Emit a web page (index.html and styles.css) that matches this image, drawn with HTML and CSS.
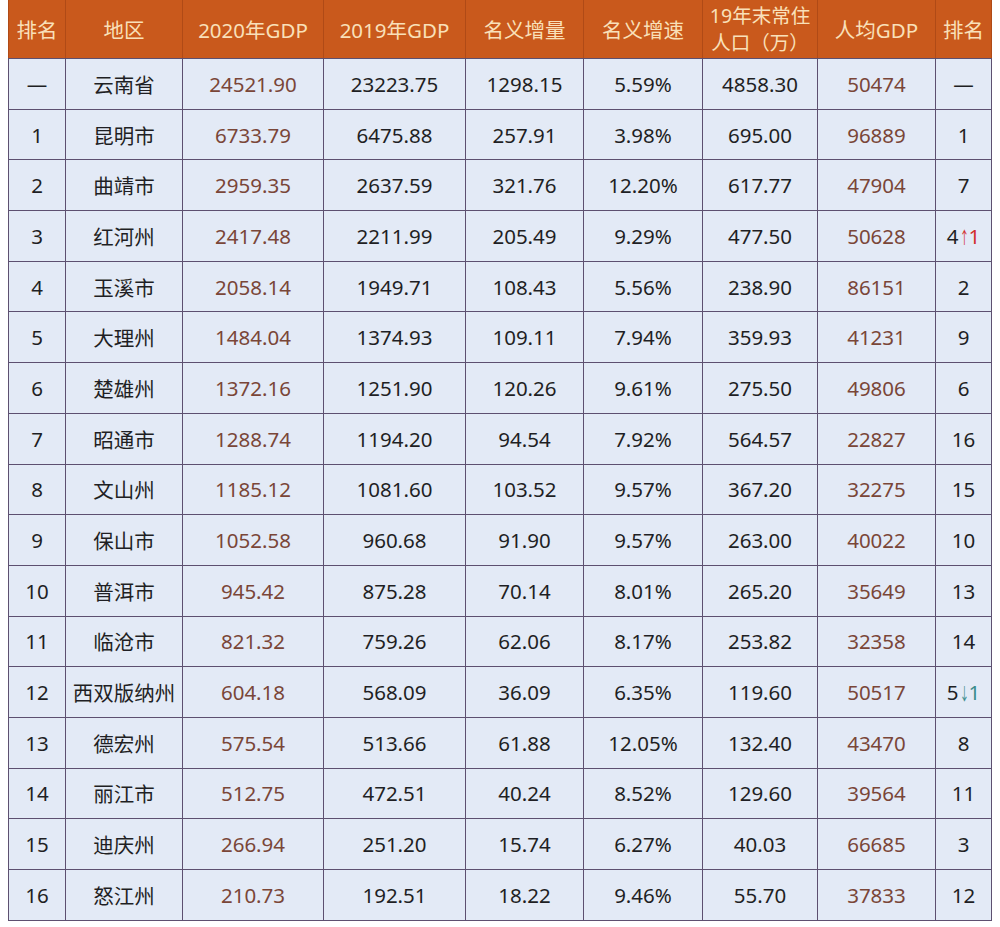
FILE: index.html
```html
<!DOCTYPE html>
<html lang="zh-CN">
<head>
<meta charset="utf-8">
<title>云南省2020年GDP</title>
<link rel="stylesheet" href="styles.css">
</head>
<body>
<div class="sheet">
  <div class="head">
    <div class="hc">排名</div>
    <div class="hc">地区</div>
    <div class="hc">2020年GDP</div>
    <div class="hc">2019年GDP</div>
    <div class="hc">名义增量</div>
    <div class="hc">名义增速</div>
    <div class="hc two">19年末常住<br>人口（万）</div>
    <div class="hc">人均GDP</div>
    <div class="hc">排名</div>
  </div>
  <div class="body">
    <div class="c">—</div><div class="c">云南省</div><div class="c br">24521.90</div><div class="c">23223.75</div><div class="c">1298.15</div><div class="c">5.59%</div><div class="c">4858.30</div><div class="c br">50474</div><div class="c">—</div>
    <div class="c">1</div><div class="c">昆明市</div><div class="c br">6733.79</div><div class="c">6475.88</div><div class="c">257.91</div><div class="c">3.98%</div><div class="c">695.00</div><div class="c br">96889</div><div class="c">1</div>
    <div class="c">2</div><div class="c">曲靖市</div><div class="c br">2959.35</div><div class="c">2637.59</div><div class="c">321.76</div><div class="c">12.20%</div><div class="c">617.77</div><div class="c br">47904</div><div class="c">7</div>
    <div class="c">3</div><div class="c">红河州</div><div class="c br">2417.48</div><div class="c">2211.99</div><div class="c">205.49</div><div class="c">9.29%</div><div class="c">477.50</div><div class="c br">50628</div><div class="c">4<span class="up"><span class="arr">↑</span>1</span></div>
    <div class="c">4</div><div class="c">玉溪市</div><div class="c br">2058.14</div><div class="c">1949.71</div><div class="c">108.43</div><div class="c">5.56%</div><div class="c">238.90</div><div class="c br">86151</div><div class="c">2</div>
    <div class="c">5</div><div class="c">大理州</div><div class="c br">1484.04</div><div class="c">1374.93</div><div class="c">109.11</div><div class="c">7.94%</div><div class="c">359.93</div><div class="c br">41231</div><div class="c">9</div>
    <div class="c">6</div><div class="c">楚雄州</div><div class="c br">1372.16</div><div class="c">1251.90</div><div class="c">120.26</div><div class="c">9.61%</div><div class="c">275.50</div><div class="c br">49806</div><div class="c">6</div>
    <div class="c">7</div><div class="c">昭通市</div><div class="c br">1288.74</div><div class="c">1194.20</div><div class="c">94.54</div><div class="c">7.92%</div><div class="c">564.57</div><div class="c br">22827</div><div class="c">16</div>
    <div class="c">8</div><div class="c">文山州</div><div class="c br">1185.12</div><div class="c">1081.60</div><div class="c">103.52</div><div class="c">9.57%</div><div class="c">367.20</div><div class="c br">32275</div><div class="c">15</div>
    <div class="c">9</div><div class="c">保山市</div><div class="c br">1052.58</div><div class="c">960.68</div><div class="c">91.90</div><div class="c">9.57%</div><div class="c">263.00</div><div class="c br">40022</div><div class="c">10</div>
    <div class="c">10</div><div class="c">普洱市</div><div class="c br">945.42</div><div class="c">875.28</div><div class="c">70.14</div><div class="c">8.01%</div><div class="c">265.20</div><div class="c br">35649</div><div class="c">13</div>
    <div class="c">11</div><div class="c">临沧市</div><div class="c br">821.32</div><div class="c">759.26</div><div class="c">62.06</div><div class="c">8.17%</div><div class="c">253.82</div><div class="c br">32358</div><div class="c">14</div>
    <div class="c">12</div><div class="c">西双版纳州</div><div class="c br">604.18</div><div class="c">568.09</div><div class="c">36.09</div><div class="c">6.35%</div><div class="c">119.60</div><div class="c br">50517</div><div class="c">5<span class="down"><span class="arr">↓</span>1</span></div>
    <div class="c">13</div><div class="c">德宏州</div><div class="c br">575.54</div><div class="c">513.66</div><div class="c">61.88</div><div class="c">12.05%</div><div class="c">132.40</div><div class="c br">43470</div><div class="c">8</div>
    <div class="c">14</div><div class="c">丽江市</div><div class="c br">512.75</div><div class="c">472.51</div><div class="c">40.24</div><div class="c">8.52%</div><div class="c">129.60</div><div class="c br">39564</div><div class="c">11</div>
    <div class="c">15</div><div class="c">迪庆州</div><div class="c br">266.94</div><div class="c">251.20</div><div class="c">15.74</div><div class="c">6.27%</div><div class="c">40.03</div><div class="c br">66685</div><div class="c">3</div>
    <div class="c">16</div><div class="c">怒江州</div><div class="c br">210.73</div><div class="c">192.51</div><div class="c">18.22</div><div class="c">9.46%</div><div class="c">55.70</div><div class="c br">37833</div><div class="c">12</div>
  </div>
</div>
</body>
</html>
```

FILE: styles.css
```css
html, body {
  margin: 0;
  padding: 0;
  background: #ffffff;
}
body {
  padding: 0 8px;
  font-family: "Noto Sans", "Noto Sans CJK SC", sans-serif;
}
.sheet {
  width: 984px;
}
.head, .body {
  display: grid;
  grid-template-columns: 56px 116px 140px 141px 117px 118px 114px 117px 55px;
  column-gap: 1px;
}
.head {
  background: #b04a16;
  padding: 0 1px;
  grid-auto-rows: 58px;
}
.body {
  background: #5d5070;
  padding: 1px;
  row-gap: 1px;
  grid-auto-rows: 49.7px;
}
.hc {
  background: #c9591c;
  color: #f9e0b9;
  font-size: 20.5px;
  display: flex;
  align-items: center;
  justify-content: center;
  text-align: center;
  white-space: nowrap;
}
.hc.two {
  line-height: 27px;
  font-size: 19.5px;
}
.c {
  background: #e3eaf6;
  color: #1f1f24;
  font-size: 20.5px;
  display: flex;
  align-items: center;
  justify-content: center;
  white-space: nowrap;
}
.br {
  color: #7a4638;
}
.up {
  color: #d2302c;
}
.down {
  color: #3a8c8c;
}
.arr {
  display: inline-block;
  font-size: 17px;
  transform: scaleX(0.55);
  margin: 0 -4px 0 -3px;
}
```
